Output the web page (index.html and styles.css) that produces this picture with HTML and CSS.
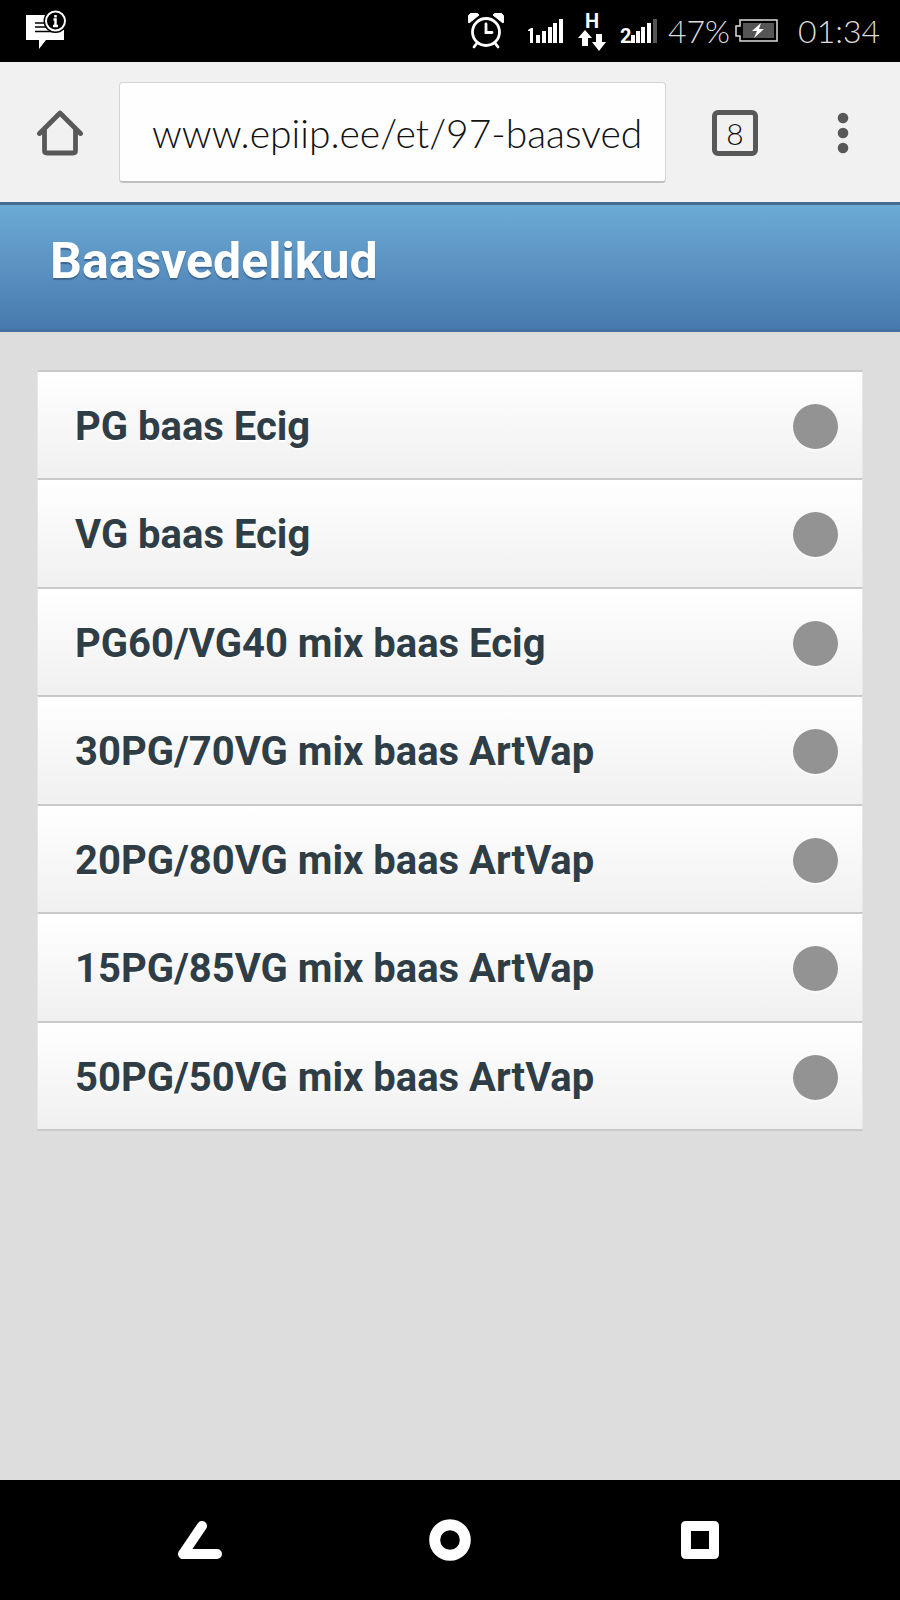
FILE: index.html
```html
<!DOCTYPE html>
<html lang="et">
<head>
<meta charset="utf-8">
<meta name="viewport" content="width=device-width, initial-scale=1">
<title>Baasvedelikud</title>
<link rel="stylesheet" href="styles.css">
</head>
<body>
<div class="statusbar">
  <svg class="icon notice" width="42" height="42" viewBox="0 0 42 42" aria-hidden="true">
    <path d="M1 6h38v25H21l-7 9v-9H1z" fill="#fff"/>
    <path d="M10 14h14M10 18h16M10 22.500h22" stroke="#000" stroke-width="1.500"/>
    <circle cx="30.500" cy="12" r="12" fill="#000"/>
    <circle cx="30.500" cy="12" r="9.500" fill="#000" stroke="#fff" stroke-width="2"/>
    <path d="M30.500 6v2.500M28.500 10.500h2v6M28 17h5" stroke="#fff" stroke-width="2.500" fill="none"/>
  </svg>
  <div class="indicators">
    <svg class="icon alarm" width="36" height="36" viewBox="0 0 36 36" aria-hidden="true">
      <path d="M1 10a6 6 0 0 1 10-8zM35 10a6 6 0 0 0-10-8z" fill="#fff" stroke="#fff"/>
      <g fill="none" stroke="#fff" stroke-width="2.800" stroke-linecap="round">
        <circle cx="18" cy="19" r="13.500"/>
        <path d="M18 11v8.500h6M9 30l-3 4M27 30l3 4"/>
      </g>
    </svg>
    <svg class="icon" width="36" height="48" viewBox="0 -4 36 48" aria-hidden="true">
      <path d="M0 19l3-2h2v15H2V20H0z" fill="#fff"/>
      <path d="M8 24h4v8H8zM14 20h4v12h-4zM20 16h4v16h-4zM25 12h4v20h-4zM31 8h4v24h-4z" fill="#fff"/>
    </svg>
    <svg class="icon" width="28" height="48" viewBox="0 -4 28 48" aria-hidden="true">
      <text class="network" x="14" y="17" text-anchor="middle">H</text>
      <path d="M7 19l7 8h-4v8H4v-8H0zM21 40l7-9h-4v-8h-6v8h-4z" fill="#fff"/>
    </svg>
    <svg class="icon second-sim" width="38" height="48" viewBox="0 -4 38 48" aria-hidden="true">
      <text class="network" x="0" y="32">2</text>
      <path d="M11 24h4v8h-4zM16 20h4v12h-4zM21 16h4v16h-4zM27 12h4v20h-4z" fill="#fff"/>
      <path d="M33 8h4v24h-4z" fill="#555"/>
    </svg>
    <span class="thin">47%</span>
    <svg class="icon battery" width="44" height="24" viewBox="0 0 44 24" aria-hidden="true">
      <path d="M5 1h37v21H5v-5H1V7h4z" fill="none" stroke="#ddd" stroke-width="1.500"/>
      <path d="M8 4h31v15H8z" fill="#555"/>
      <path d="M26 4l-9 8h5l-3 7 10-9h-5z" fill="#fff"/>
    </svg>
    <span class="thin">01:34</span>
  </div>
</div>

<div class="toolbar">
  <button class="tool" type="button" aria-label="Avaleht">
    <svg class="icon" width="46" height="46" viewBox="0 0 46 46">
      <path d="M2.500 23.500L23 3l20.500 20.500M7.500 19v21.500q0 2.500 2.500 2.500h26q2.500 0 2.500-2.500V19" fill="none" stroke="#585858" stroke-width="4.800" stroke-linecap="round" stroke-linejoin="round"/>
    </svg>
  </button>
  <input class="url" type="text" aria-label="Aadress" value="www.epiip.ee/et/97-baasved">
  <button class="tabs" type="button" aria-label="Vahekaardid: 8">8</button>
  <button class="tool" type="button" aria-label="Menüü">
    <svg class="icon" width="12" height="46" viewBox="0 0 12 46">
      <g fill="#585858"><circle cx="6" cy="8" r="5.300"/><circle cx="6" cy="23" r="5.300"/><circle cx="6" cy="38" r="5.300"/></g>
    </svg>
  </button>
</div>

<header class="titlebar"><h1>Baasvedelikud</h1></header>

<main class="content">
  <ul class="list">
    <li><a class="row" href="#pg">PG baas Ecig<span class="dot"></span></a></li>
    <li><a class="row" href="#vg">VG baas Ecig<span class="dot"></span></a></li>
    <li><a class="row" href="#pg60">PG60/VG40 mix baas Ecig<span class="dot"></span></a></li>
    <li><a class="row" href="#pg30">30PG/70VG mix baas ArtVap<span class="dot"></span></a></li>
    <li><a class="row" href="#pg20">20PG/80VG mix baas ArtVap<span class="dot"></span></a></li>
    <li><a class="row" href="#pg15">15PG/85VG mix baas ArtVap<span class="dot"></span></a></li>
    <li><a class="row" href="#pg50">50PG/50VG mix baas ArtVap<span class="dot"></span></a></li>
  </ul>
</main>

<nav class="navbar" aria-label="Süsteem">
  <button class="tool" type="button" aria-label="Tagasi">
    <svg class="icon" width="44" height="42" viewBox="0 0 44 42">
      <path d="M24 7L5 35h34" fill="none" stroke="#fff" stroke-width="10" stroke-linecap="round" stroke-linejoin="round"/>
    </svg>
  </button>
  <button class="tool" type="button" aria-label="Avakuva">
    <svg class="icon" width="42" height="42" viewBox="0 0 42 42">
      <circle cx="21" cy="21" r="15.300" fill="none" stroke="#fff" stroke-width="11"/>
    </svg>
  </button>
  <button class="tool" type="button" aria-label="Hiljutised">
    <svg class="icon" width="44" height="42" viewBox="0 0 44 42">
      <path d="M8 2h28q5 0 5 5v28q0 5-5 5H8q-5 0-5-5V7q0-5 5-5zM13 12v18h18V12z" fill="#fff" fill-rule="evenodd"/>
    </svg>
  </button>
</nav>
</body>
</html>
```
FILE: styles.css
```css
* {
  box-sizing: border-box;
}

body {
  margin: 0;
  min-height: 100vh;
  display: flex;
  flex-direction: column;
  background: #ddd;
  font-family: Roboto, "Liberation Sans", sans-serif;
}

.icon {
  display: block;
  flex: none;
}

/* Status bar */
.statusbar {
  display: flex;
  align-items: center;
  justify-content: space-between;
  height: 62px;
  padding: 0 20px 0 25px;
  background: #000;
  color: #ddd;
}

.notice {
  margin-bottom: 3px;
}

.indicators {
  display: flex;
  align-items: center;
  gap: 14px;
}

.alarm {
  margin-right: 10px;
}

.second-sim {
  margin-right: -4px;
}

.battery {
  margin: 0 5px 0 -9px;
}

.thin {
  font: 300 32px/40px Lato, sans-serif;
}

.network {
  font: 700 20px Roboto, sans-serif;
  fill: #fff;
}

/* Browser toolbar */
.toolbar {
  display: flex;
  align-items: center;
  height: 140px;
  padding: 1px 51px 0 37px;
  background: #f1f1f1;
}

.tool {
  padding: 0;
  border: 0;
  background: none;
}

.url {
  flex: 1;
  min-width: 0;
  height: 101px;
  margin: 0 46px 0 36px;
  padding: 2px 0 0 32px;
  border: 1px solid #d4d4d4;
  border-bottom: 2px solid #c0c0c0;
  border-radius: 4px;
  background: #fefefe;
  color: #111;
  font: 300 39px Lato, sans-serif;
}

.tabs {
  width: 46px;
  height: 46px;
  margin-right: 79px;
  padding: 0;
  border: 5px solid #585858;
  border-radius: 6px;
  background: none;
  color: #111;
  font: 300 30px/34px Lato, sans-serif;
}

/* Page */
.titlebar {
  padding: 25px 50px 36px;
  border-top: 3px solid #456a94;
  border-bottom: 3px solid #456f9f;
  background: linear-gradient(#6cabd6, #4879ae);
}

.titlebar h1 {
  margin: 0;
  color: #fff;
  font-size: 50px;
  line-height: 63px;
  text-shadow: 0 2px 1px #3e6790;
}

.content {
  flex: 1;
  padding: 38px 37px;
}

.list {
  margin: 0;
  padding: 0;
  list-style: none;
  border-bottom: 2px solid #c9c9c9;
}

.row {
  display: flex;
  align-items: center;
  justify-content: space-between;
  min-height: 108px;
  padding: 2px 24px 0 37px;
  border: 1px solid #e6e6e6;
  border-top: 2px solid #c9c9c9;
  border-bottom: 0;
  background: linear-gradient(#fff, #f0f0f0);
  color: #2f3e46;
  font-size: 40px;
  font-weight: 700;
  text-decoration: none;
  text-shadow: 0 2px 0 #fff;
}

.list li:nth-child(even) .row {
  min-height: 109px;
}

.dot {
  width: 45px;
  height: 45px;
  border-radius: 50%;
  background: #939393;
  box-shadow: 0 2px 1px #fafafa;
}

/* System navigation */
.navbar {
  display: flex;
  align-items: center;
  justify-content: center;
  gap: 207px;
  height: 120px;
  background: #000;
}
```
